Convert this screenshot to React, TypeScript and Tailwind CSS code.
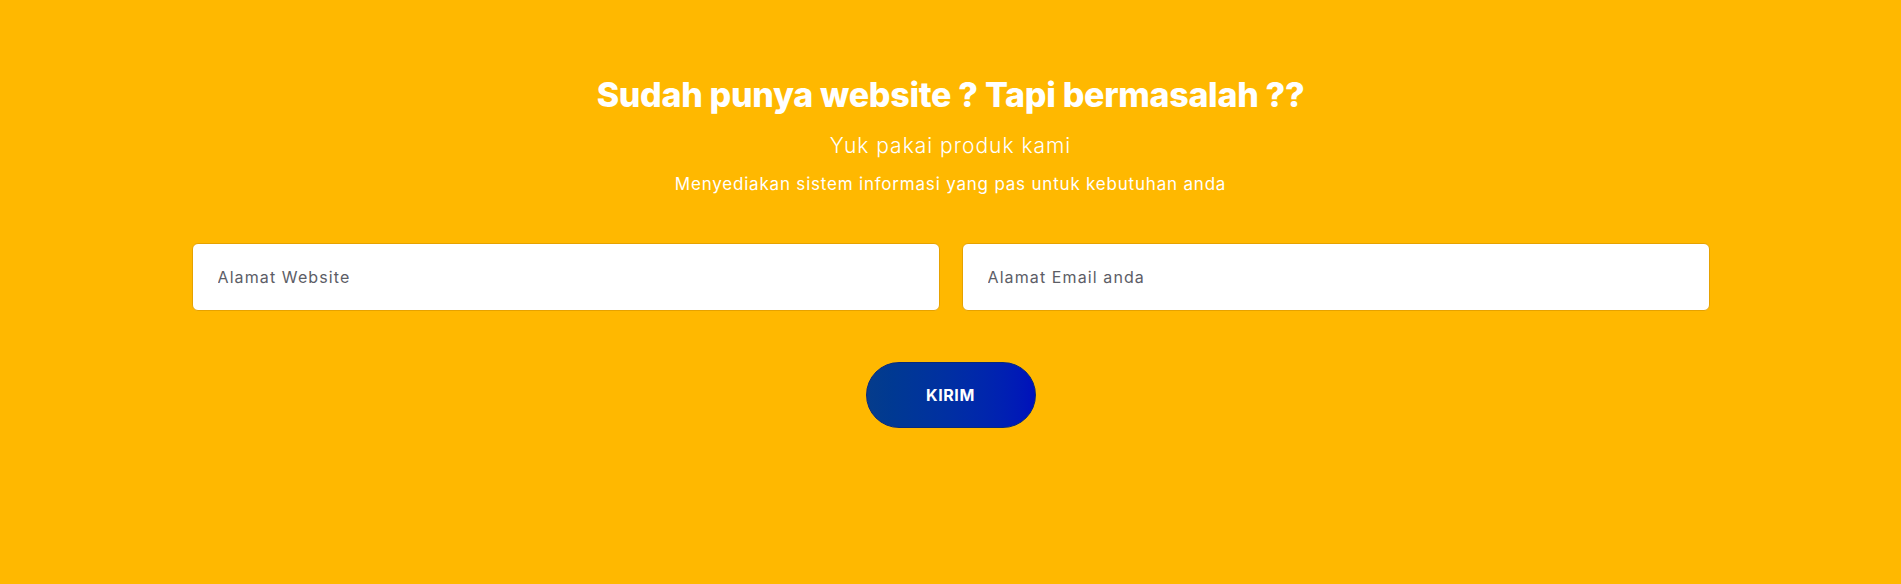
const App: React.FC = () => {
  return (
    <div className="min-h-screen w-full bg-[#ffb800] pt-[75px] font-['Inter',sans-serif]">
      <div className="flex flex-col items-center text-white text-center">
        <h2 className="text-[34px] leading-[40px] font-extrabold tracking-[-0.3px]">
          Sudah punya website ? Tapi bermasalah ??
        </h2>
        <p className="mt-[17px] text-[21px] leading-[28px] font-light tracking-[1px]">
          Yuk pakai produk kami
        </p>
        <p className="mt-[12px] text-[17px] leading-[24px] font-normal tracking-[0.8px]">
          Menyediakan sistem informasi yang pas untuk kebutuhan anda
        </p>
      </div>

      <form
        className="mx-auto mt-[47px] w-[1518px] flex flex-col items-center"
        onSubmit={(e) => e.preventDefault()}
      >
        <div className="w-full grid grid-cols-2 gap-[22px]">
          <input
            type="text"
            name="website"
            placeholder="Alamat Website"
            className="h-[68px] bg-white border border-[#e6a200] rounded-[6px] pl-[25px] text-[16px] tracking-[1.1px] text-[#444] placeholder:text-[#5c5d66] focus:outline-none"
          />
          <input
            type="email"
            name="email"
            placeholder="Alamat Email anda"
            className="h-[68px] bg-white border border-[#e6a200] rounded-[6px] pl-[25px] text-[16px] tracking-[1.1px] text-[#444] placeholder:text-[#5c5d66] focus:outline-none"
          />
        </div>
        <button
          type="submit"
          className="mt-[51px] w-[170px] h-[66px] rounded-full bg-gradient-to-r from-[#053c8b] to-[#0010bb] border border-[#0a2a7a] text-white text-[16px] font-bold tracking-[0.6px] cursor-pointer"
        >
          KIRIM
        </button>
      </form>
    </div>
  );
};

export default App;
